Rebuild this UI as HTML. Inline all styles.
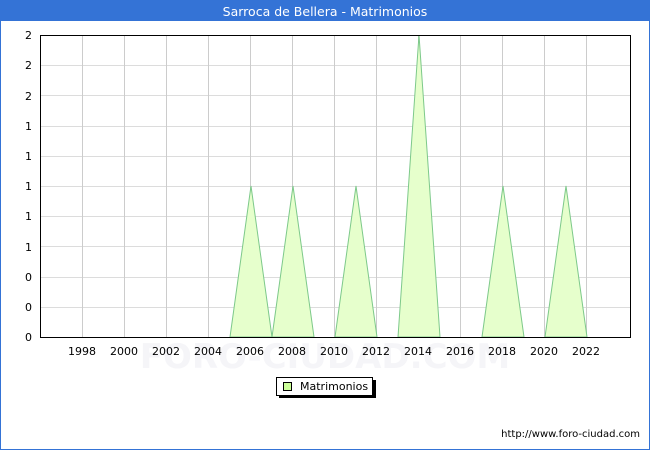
<!DOCTYPE html>
<html><head><style>
body{margin:0;width:650px;height:450px;overflow:hidden;background:#fff;font-family:"DejaVu Sans","Liberation Sans",sans-serif;}
</style></head><body>
<svg width="650" height="450" xmlns="http://www.w3.org/2000/svg" font-family="DejaVu Sans, Liberation Sans, sans-serif">
<rect x="0.5" y="0.5" width="649" height="449" fill="#fff" stroke="#3473d6"/>
<rect x="0" y="0" width="650" height="21" fill="#3473d6"/>
<text x="325" y="16" text-anchor="middle" fill="#fff" font-size="12.5">Sarroca de Bellera - Matrimonios</text>
<text x="325" y="368" text-anchor="middle" fill="#f5f5f8" font-size="34" font-weight="bold">FORO-CIUDAD.COM</text>
<g stroke="#dcdcdc" stroke-width="1">
<line x1="40" x2="631" y1="65.5" y2="65.5"/><line x1="40" x2="631" y1="95.5" y2="95.5"/><line x1="40" x2="631" y1="126.5" y2="126.5"/><line x1="40" x2="631" y1="156.5" y2="156.5"/><line x1="40" x2="631" y1="186.5" y2="186.5"/><line x1="40" x2="631" y1="216.5" y2="216.5"/><line x1="40" x2="631" y1="246.5" y2="246.5"/><line x1="40" x2="631" y1="277.5" y2="277.5"/><line x1="40" x2="631" y1="307.5" y2="307.5"/>
</g>
<g stroke="#cccccc">
<line x1="82.5" x2="82.5" y1="35" y2="337"/><line x1="124.5" x2="124.5" y1="35" y2="337"/><line x1="166.5" x2="166.5" y1="35" y2="337"/><line x1="208.5" x2="208.5" y1="35" y2="337"/><line x1="250.5" x2="250.5" y1="35" y2="337"/><line x1="292.5" x2="292.5" y1="35" y2="337"/><line x1="334.5" x2="334.5" y1="35" y2="337"/><line x1="376.5" x2="376.5" y1="35" y2="337"/><line x1="418.5" x2="418.5" y1="35" y2="337"/><line x1="460.5" x2="460.5" y1="35" y2="337"/><line x1="502.5" x2="502.5" y1="35" y2="337"/><line x1="544.5" x2="544.5" y1="35" y2="337"/><line x1="586.5" x2="586.5" y1="35" y2="337"/>
</g>
<g fill="#e6ffcc" stroke="#7dc98a" stroke-width="1">
<polygon points="230,337 251,186 272,337"/>
<polygon points="272,337 293,186 314,337"/>
<polygon points="335,337 356,186 377,337"/>
<polygon points="398,337 419,35 440,337"/>
<polygon points="482,337 503,186 524,337"/>
<polygon points="545,337 566,186 587,337"/>
</g>
<rect x="40.5" y="35.5" width="590" height="302" fill="none" stroke="#000"/>
<g font-size="11" fill="#000" text-anchor="end">
<text x="32" y="39">2</text><text x="32" y="69">2</text><text x="32" y="100">2</text><text x="32" y="130">1</text><text x="32" y="160">1</text><text x="32" y="190">1</text><text x="32" y="220">1</text><text x="32" y="251">1</text><text x="32" y="281">0</text><text x="32" y="311">0</text><text x="32" y="341">0</text>
</g>
<g font-size="11" fill="#000" text-anchor="middle">
<text x="82" y="355">1998</text><text x="124" y="355">2000</text><text x="166" y="355">2002</text><text x="208" y="355">2004</text><text x="250" y="355">2006</text><text x="292" y="355">2008</text><text x="334" y="355">2010</text><text x="376" y="355">2012</text><text x="418" y="355">2014</text><text x="460" y="355">2016</text><text x="502" y="355">2018</text><text x="544" y="355">2020</text><text x="586" y="355">2022</text>
</g>
<rect x="279" y="380" width="97" height="18" fill="#000"/>
<rect x="276.5" y="377.5" width="96" height="18" fill="#fff" stroke="#000"/>
<rect x="283.5" y="382.5" width="8" height="8" fill="#ccff99" stroke="#000"/>
<text x="300" y="390" font-size="11">Matrimonios</text>
<text x="640" y="437" text-anchor="end" font-size="10" fill="#000">http://www.foro-ciudad.com</text>
</svg>
</body></html>
